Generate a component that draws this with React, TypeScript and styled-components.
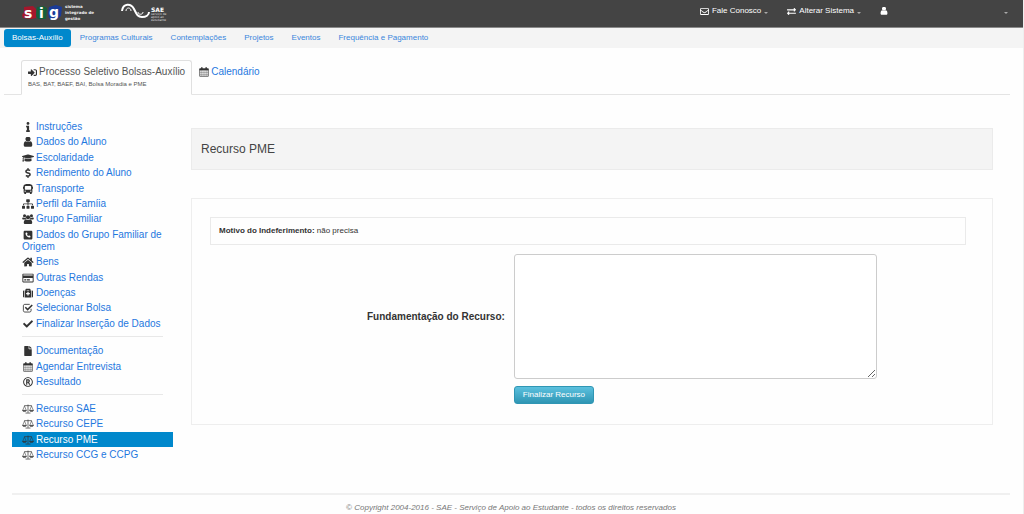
import React from "react";
import styled, { createGlobalStyle, css } from "styled-components";
import {
  FaBus,
  FaCheck,
  FaDollarSign,
  FaExchangeAlt,
  FaFile,
  FaGraduationCap,
  FaHome,
  FaInfo,
  FaMedkit,
  FaRegCreditCard,
  FaRegEnvelope,
  FaRegRegistered,
  FaSignInAlt,
  FaSitemap,
} from "react-icons/fa";
import { FaSquarePhone } from "react-icons/fa6";

const GlobalStyle = createGlobalStyle`
  *, *::before, *::after { box-sizing: border-box; }
  body {
    margin: 0;
    background: #fefefe;
    color: #333;
    font-family: "Liberation Sans", Arial, sans-serif;
    font-size: 10px;
    line-height: 12px;
  }
  a { color: #1f78de; text-decoration: none; }
  ul { list-style: none; margin: 0; padding: 0; }
`;

const Page = styled.div`
  min-height: 100vh;
  border-right: 1px solid #eee;
`;

const TopBar = styled.header`
  display: flex;
  align-items: flex-start;
  height: 28px;
  padding: 0 15px 0 20px;
  background: #444;
  border-bottom: 1px solid #8a8a8a;
`;

const Logos = styled.div`
  display: flex;
  gap: 24px;
  flex: 1;
`;

const TopMenu = styled.nav`
  display: flex;
  align-items: center;
  height: 22px;
`;

const TopLink = styled.a<{ $space?: number }>`
  display: flex;
  align-items: center;
  gap: 3px;
  margin-right: ${(p) => p.$space ?? 0}px;
  color: #fff;
  font-size: 8px;
  white-space: nowrap;
`;

const Caret = styled.span`
  width: 0;
  margin-top: 3px;
  border: 2px solid transparent;
  border-top-color: #aaa;
  border-bottom: 0;
`;

const NavBar = styled.nav`
  display: flex;
  align-items: center;
  height: 20px;
  padding-left: 4px;
  background: #f4f4f4;
`;

const NavLink = styled.a<{ $active?: boolean }>`
  padding: 3px 9px;
  border-radius: 3px;
  color: #3a86dc;
  font-size: 8px;
  white-space: nowrap;
  ${(p) =>
    p.$active &&
    css`
      padding: 3px 8px;
      background: #0088cc;
      color: #fff;
    `}
`;

const Tabs = styled.nav`
  display: flex;
  align-items: flex-start;
  height: 35px;
  margin: 12px 13px 0 4px;
  padding-left: 17px;
  border-bottom: 1px solid #e4e4e4;
`;

const Tab = styled.a<{ $active?: boolean }>`
  height: 35px;
  padding: 5px 6px;
  border: 1px solid transparent;
  white-space: nowrap;
  ${(p) =>
    p.$active &&
    css`
      border-color: #e0e0e0;
      border-bottom-color: #fefefe;
      border-radius: 3px 3px 0 0;
      background: #fefefe;
      color: #555;
    `}
`;

const TabTitle = styled.span`
  display: flex;
  align-items: center;
  gap: 2px;

  svg { color: #333; }
`;

const TabNote = styled.small`
  display: block;
  font-size: 6px;
`;

const Body = styled.div`
  display: grid;
  grid-template-columns: 161px minmax(0, 1fr);
  column-gap: 18px;
  padding: 24px 30px 0 12px;
`;

const MenuGroup = styled.ul<{ $height: number }>`
  display: flex;
  flex-direction: column;
  justify-content: space-between;
  min-height: ${(p) => p.$height}px;

  & + & {
    margin-top: 5px;
    padding-top: 7px;
    background: linear-gradient(#e8e8e8, #e8e8e8) 10px 0 / calc(100% - 20px) 1px no-repeat;
  }
`;

const MenuLink = styled.a<{ $active?: boolean }>`
  display: block;
  padding: 2px 10px 1px;
  ${(p) =>
    p.$active &&
    css`
      background: #0088cc;
      color: #fff;
    `}
`;

const MenuIcon = styled.span`
  display: inline-flex;
  justify-content: center;
  width: 12px;
  margin-right: 2px;
  vertical-align: -2px;
  color: #333;

  svg {
    flex: none;
    width: 12px;
    height: 10px;
  }
`;

const Main = styled.main`
  padding-top: 9px;
`;

const Title = styled.h1`
  margin: 0 0 28px;
  padding: 12px 9px;
  border: 1px solid #ebebeb;
  background: #f4f4f4;
  color: #444;
  font-size: 12px;
  font-weight: normal;
  line-height: 16px;
`;

const Panel = styled.section`
  padding: 18px 26px 20px 18px;
  border: 1px solid #eee;
`;

const Reason = styled.p`
  margin: 0 0 9px;
  padding: 7px 8px;
  border: 1px solid #eaeaea;
  font-size: 8px;
  line-height: 12px;
`;

const Form = styled.form`
  display: grid;
  grid-template-columns: 39% 48%;
  column-gap: 9px;
  row-gap: 7px;
  align-items: center;
`;

const Label = styled.label`
  font-weight: bold;
  text-align: right;
`;

const TextArea = styled.textarea`
  display: block;
  width: 100%;
  height: 125px;
  padding: 4px;
  border: 1px solid #ccc;
  border-radius: 3px;
  background: #fff;
  font: inherit;
`;

const Submit = styled.button`
  grid-column: 2;
  justify-self: start;
  height: 18px;
  padding: 0 8px;
  border: 1px solid #2f96b4;
  border-radius: 3px;
  background: linear-gradient(#5bc0de, #2f96b4);
  color: #fff;
  font: inherit;
  font-size: 8px;
  line-height: 12px;
`;

const Footer = styled.footer`
  margin: 31px 13px 0 12px;
  padding: 7px 0 0;
  border-top: 2px solid #f0f0f0;
  color: #777;
  font-size: 8px;
  font-style: italic;
  text-align: center;
`;

const CalendarIcon = ({ size = 10 }: { size?: number }) => (
  <svg width={size} height={size} viewBox="0 0 28 28" fill="none" stroke="currentColor" aria-hidden="true">
    <path d="M2 5h24v21H2z" strokeWidth="2" />
    <path d="M2 5h24v4H2z" fill="currentColor" strokeWidth="1" />
    <path d="M8 10v16M14 10v16M20 10v16M2 15h24M2 20.500h24" strokeWidth="1" />
    <path d="M8 2v5M20 2v5" strokeWidth="4" strokeLinecap="round" />
  </svg>
);

const UserIcon = ({ size = 9 }: { size?: number }) => (
  <svg width={size} height={size} viewBox="200 200 1392 1500" fill="currentColor" aria-hidden="true">
    <path d="M1536 1399q0 109-62.500 187t-150.500 78h-854q-88 0-150.500-78t-62.500-187q0-85 8.500-160.500t31.500-152 58.500-131 94-89 134.500-34.500q131 128 313 128t313-128q76 0 134.500 34.500t94 89 58.500 131 31.500 152 8.500 160.500zm-256-887q0 159-112.500 271.500t-271.500 112.500-271.500-112.500-112.500-271.500 112.500-271.500 271.500-112.500 271.500 112.500 112.500 271.500z" />
  </svg>
);

const UsersIcon = ({ size = 9 }: { size?: number }) => (
  <svg width={size} height={size} viewBox="0 0 30 26" fill="currentColor" aria-hidden="true">
    <circle cx="6" cy="4.500" r="4" />
    <circle cx="24" cy="4.500" r="4" />
    <circle cx="15" cy="8.500" r="5.500" />
    <path d="M3 9c2 1.500 4 1.500 6 0 0 2 .5 3.500 2 5H3c-2 0-3-1-3-2.500C0 10 1 9 3 9zM27 9c-2 1.500-4 1.500-6 0 0 2-.5 3.500-2 5h8c2 0 3-1 3-2.500C30 10 29 9 27 9z" />
    <path d="M10 14c3 2.500 7 2.500 10 0 4 0 6 4 6 8 0 2.500-1.500 4-4 4H8c-2.500 0-4-1.500-4-4 0-4 2-8 6-8z" />
  </svg>
);

const CheckSquareIcon = ({ size = 9 }: { size?: number }) => (
  <svg width={size} height={size} viewBox="0 0 28 26" fill="none" stroke="currentColor" aria-hidden="true">
    <path d="M22 15v5c0 2-1.500 3.500-3.500 3.500h-13C3.500 23.500 2 22 2 20V7c0-2 1.500-3.500 3.500-3.500h13" strokeWidth="2.200" />
    <path d="M7 11l6 6L25 5" strokeWidth="4" />
  </svg>
);

const ScaleIcon = ({ size = 9 }: { size?: number }) => (
  <svg width={size} height={size} viewBox="0 0 34 27" fill="none" stroke="currentColor" aria-hidden="true">
    <path d="M6 4h22M17 1v23M10 25h14" strokeWidth="2" />
    <path d="M7 5L2 17M7 5l5 12M27 5l-5 12M27 5l5 12" strokeWidth="1.500" />
    <path d="M1 17h12c0 5-12 5-12 0zM21 17h12c0 5-12 5-12 0z" fill="currentColor" strokeWidth="1" />
  </svg>
);

const SigLogo = () => (
  <svg width="76" height="24" viewBox="0 0 76 24" role="img" aria-label="sig">
    <path d="M4 7l9-1 3 3v9l-4 1-9-1-1-3 2-3z" fill="#a5172c" />
    <path d="M17 7l6-1 4 2-1 11-8 0-2-3z" fill="#14603a" />
    <path d="M29 7l7-2 6 2-1 9-5 4-7-2-1-5z" fill="#1b3b98" />
    <g fill="#fff" fontFamily="DejaVu Sans" fontWeight="bold" fontSize="14">
      <text x="4" y="18">s</text>
      <text x="19" y="18">i</text>
      <text x="29" y="17">g</text>
    </g>
    <g fill="#eee" fontFamily="DejaVu Sans" fontWeight="bold" fontSize="4">
      <text x="45" y="8">sistema</text>
      <text x="45" y="14">integrado de</text>
      <text x="45" y="20">gestão</text>
    </g>
  </svg>
);

const SaeLogo = () => (
  <svg width="48" height="24" viewBox="0 0 48 24" role="img" aria-label="SAE">
    <g fill="none" stroke="#fff">
      <path d="M2 11C3 3 11 3 14 9s4 8 8 8 7-2 7-5" strokeWidth="2" />
      <path d="M6 11c0-4 5-4 5 0M18 12c0 3 5 3 5 0" strokeWidth="1" />
    </g>
    <text x="31" y="12" fill="#fff" fontFamily="DejaVu Sans" fontWeight="bold" fontSize="6">SAE</text>
    <g fill="#ddd" fontFamily="DejaVu Sans" fontSize="3">
      <text x="31" y="15">serviço de</text>
      <text x="31" y="18">apoio ao</text>
      <text x="31" y="21">estudante</text>
    </g>
  </svg>
);

type MenuItem = { label: string; icon: React.ComponentType<{ size?: number }>; active?: boolean };

const menu: { height: number; items: MenuItem[] }[] = [
  {
    height: 212,
    items: [
      { label: "Instruções", icon: FaInfo },
      { label: "Dados do Aluno", icon: UserIcon },
      { label: "Escolaridade", icon: FaGraduationCap },
      { label: "Rendimento do Aluno", icon: FaDollarSign },
      { label: "Transporte", icon: FaBus },
      { label: "Perfil da Famíia", icon: FaSitemap },
      { label: "Grupo Familiar", icon: UsersIcon },
      { label: "Dados do Grupo Familiar de Origem", icon: FaSquarePhone },
      { label: "Bens", icon: FaHome },
      { label: "Outras Rendas", icon: FaRegCreditCard },
      { label: "Doenças", icon: FaMedkit },
      { label: "Selecionar Bolsa", icon: CheckSquareIcon },
      { label: "Finalizar Inserção de Dados", icon: FaCheck },
    ],
  },
  {
    height: 53,
    items: [
      { label: "Documentação", icon: FaFile },
      { label: "Agendar Entrevista", icon: CalendarIcon },
      { label: "Resultado", icon: FaRegRegistered },
    ],
  },
  {
    height: 68,
    items: [
      { label: "Recurso SAE", icon: ScaleIcon },
      { label: "Recurso CEPE", icon: ScaleIcon },
      { label: "Recurso PME", icon: ScaleIcon, active: true },
      { label: "Recurso CCG e CCPG", icon: ScaleIcon },
    ],
  },
];

const sections = [
  "Bolsas-Auxílio",
  "Programas Culturais",
  "Contemplações",
  "Projetos",
  "Eventos",
  "Frequência e Pagamento",
];

export default function App() {
  return (
    <Page>
      <GlobalStyle />
      <TopBar>
        <Logos>
          <SigLogo />
          <SaeLogo />
        </Logos>
        <TopMenu>
          <TopLink href="#contato" $space={19}>
            <FaRegEnvelope size={9} /> Fale Conosco <Caret />
          </TopLink>
          <TopLink href="#sistema" $space={19}>
            <FaExchangeAlt size={9} /> Alterar Sistema <Caret />
          </TopLink>
          <TopLink href="#usuario" aria-label="Usuário" $space={116}>
            <UserIcon size={8} />
          </TopLink>
          <TopLink href="#conta" aria-label="Conta">
            <Caret />
          </TopLink>
        </TopMenu>
      </TopBar>
      <NavBar>
        {sections.map((name, i) => (
          <NavLink key={name} href="#" $active={i === 0}>
            {name}
          </NavLink>
        ))}
      </NavBar>
      <Tabs>
        <Tab href="#processo" $active>
          <TabTitle>
            <FaSignInAlt size={9} /> Processo Seletivo Bolsas-Auxílio
          </TabTitle>
          <TabNote>BAS, BAT, BAEF, BAI, Bolsa Moradia e PME</TabNote>
        </Tab>
        <Tab href="#calendario">
          <TabTitle>
            <CalendarIcon /> Calendário
          </TabTitle>
        </Tab>
      </Tabs>
      <Body>
        <nav>
          {menu.map((group, i) => (
            <MenuGroup key={i} $height={group.height}>
              {group.items.map(({ label, icon: Icon, active }) => (
                <li key={label}>
                  <MenuLink href="#" $active={active}>
                    <MenuIcon>
                      <Icon />
                    </MenuIcon>
                    {label}
                  </MenuLink>
                </li>
              ))}
            </MenuGroup>
          ))}
        </nav>
        <Main>
          <Title>Recurso PME</Title>
          <Panel>
            <Reason>
              <strong>Motivo do Indeferimento:</strong> não precisa
            </Reason>
            <Form onSubmit={(e) => e.preventDefault()}>
              <Label htmlFor="fundamentacao">Fundamentação do Recurso:</Label>
              <TextArea id="fundamentacao" />
              <Submit type="submit">Finalizar Recurso</Submit>
            </Form>
          </Panel>
        </Main>
      </Body>
      <Footer>© Copyright 2004-2016 - SAE - Serviço de Apoio ao Estudante - todos os direitos reservados</Footer>
    </Page>
  );
}
